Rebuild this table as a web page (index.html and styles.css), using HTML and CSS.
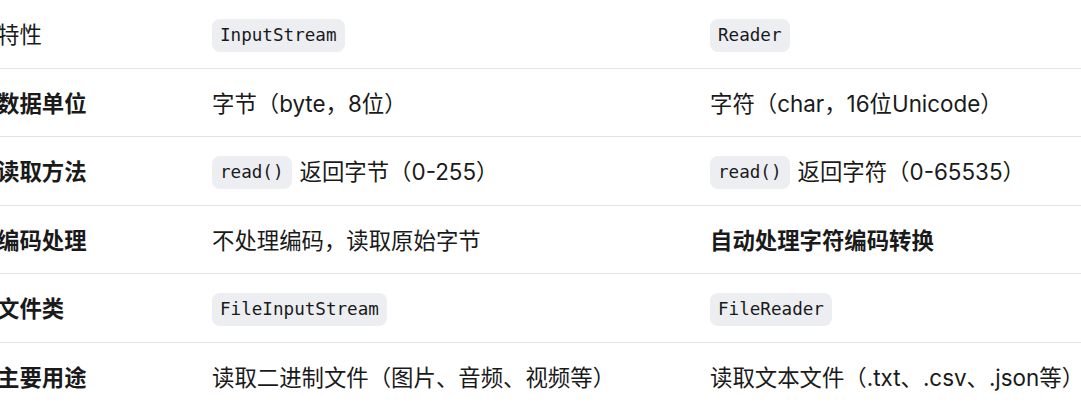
FILE: index.html
```html
<!DOCTYPE html>
<html lang="zh-CN">
<head>
<meta charset="utf-8">
<link rel="stylesheet" href="styles.css">
</head>
<body>
<div class="table">
  <div class="row">
    <div class="cell">特性</div>
    <div class="cell"><code class="code">InputStream</code></div>
    <div class="cell"><code class="code">Reader</code></div>
  </div>
  <div class="row">
    <div class="cell strong">数据单位</div>
    <div class="cell">字节（byte，8位）</div>
    <div class="cell">字符（char，16位Unicode）</div>
  </div>
  <div class="row">
    <div class="cell strong">读取方法</div>
    <div class="cell"><code class="code">read()</code><span>返回字节（0-255）</span></div>
    <div class="cell"><code class="code">read()</code><span>返回字符（0-65535）</span></div>
  </div>
  <div class="row">
    <div class="cell strong">编码处理</div>
    <div class="cell">不处理编码，读取原始字节</div>
    <div class="cell strong">自动处理字符编码转换</div>
  </div>
  <div class="row">
    <div class="cell strong">文件类</div>
    <div class="cell"><code class="code">FileInputStream</code></div>
    <div class="cell"><code class="code">FileReader</code></div>
  </div>
  <div class="row last">
    <div class="cell strong">主要用途</div>
    <div class="cell">读取二进制文件（图片、音频、视频等）</div>
    <div class="cell">读取文本文件（.txt、.csv、.json等）</div>
  </div>
</div>
</body>
</html>
```

FILE: styles.css
```css
html, body {
  margin: 0;
  padding: 0;
  background: #ffffff;
}

body {
  font-family: Inter, "Noto Sans CJK SC", sans-serif;
  font-size: 22.4px;
  color: #1a1a1a;
  overflow: hidden;
}

.table {
  margin-left: -3px;
}

.row {
  display: grid;
  grid-template-columns: 215px 498px 1fr;
  border-bottom: 1px solid #e3e3e3;
}

.row.last {
  border-bottom: none;
}

.cell {
  display: flex;
  align-items: center;
  gap: 8px;
  min-height: 32.5px;
  padding: 19px 0 16px;
  line-height: 32px;
  white-space: nowrap;
}

.strong {
  font-weight: 700;
}

.code {
  display: inline-block;
  font-family: "DejaVu Sans Mono", monospace;
  font-size: 17.6px;
  line-height: 32.5px;
  height: 32.5px;
  padding: 0 8px;
  border-radius: 8px;
  background: #eceef2;
  color: #1a1a1a;
}
```
